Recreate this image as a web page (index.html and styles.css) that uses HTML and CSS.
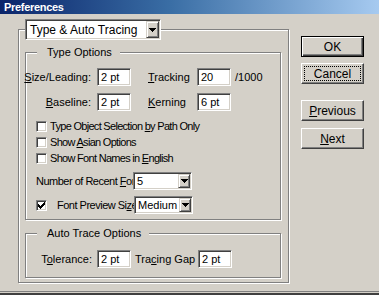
FILE: index.html
```html
<!DOCTYPE html>
<html>
<head>
<meta charset="utf-8">
<link rel="stylesheet" href="styles.css">
</head>
<body>
<div class="window">
  <div class="titlebar">Preferences</div>
  <div class="client">
    <fieldset class="group outer">
      <legend class="select-legend">
        <div class="select big">
          <span class="select-text">Type &amp; Auto Tracing</span>
          <span class="arrow-btn"><svg width="7" height="4" viewBox="0 0 7 4" shape-rendering="crispEdges"><path d="M0 0h7v1h-1v1h-1v1h-1v1h-1v-1h-1v-1h-1v-1h-1z" fill="#000"/></svg></span>
        </div>
      </legend>

      <fieldset class="group inner type-opts">
        <legend class="glabel">Type Options</legend>
        <div class="row">
          <div class="rlbl w55"><span><u>S</u>ize/Leading:</span></div>
          <div class="field f1">2 pt</div>
          <div class="tlbl"><u>T</u>racking</div>
          <div class="field">20</div>
          <div class="unit">/1000</div>
        </div>
        <div class="row r2">
          <div class="rlbl w55"><span><u>B</u>aseline:</span></div>
          <div class="field f1">2 pt</div>
          <div class="tlbl"><u>K</u>erning</div>
          <div class="field">6 pt</div>
        </div>
        <div class="checks">
          <div class="cbrow"><span class="cb"></span><span class="cbtext">Type Object Selection <u>b</u>y Path Only</span></div>
          <div class="cbrow"><span class="cb"></span><span class="cbtext">Show <u>A</u>sian Options</span></div>
          <div class="cbrow"><span class="cb"></span><span class="cbtext">Show Font Names in <u>E</u>nglish</span></div>
        </div>
        <div class="ddrow">
          <div class="ddlbl wide"><span>Number of Recent <u>F</u>onts:</span></div>
          <div class="select small">
            <span class="select-text">5</span>
            <span class="arrow-btn"><svg width="7" height="4" viewBox="0 0 7 4" shape-rendering="crispEdges"><path d="M0 0h7v1h-1v1h-1v1h-1v1h-1v-1h-1v-1h-1v-1h-1z" fill="#000"/></svg></span>
          </div>
        </div>
        <div class="ddrow r-dd2">
          <span class="cb checked"><svg width="7" height="7" viewBox="0 0 7 7" shape-rendering="crispEdges"><path d="M6 0h1v3h-1v1h-1v1h-1v1h-1v1h-1v-1h-1v-1h-1v-3h1v1h1v1h1v-1h1v-1h1z" fill="#000"/></svg></span>
          <div class="ddlbl narrow"><span>Font Preview Si<u>z</u>e:</span></div>
          <div class="select small">
            <span class="select-text">Medium</span>
            <span class="arrow-btn"><svg width="7" height="4" viewBox="0 0 7 4" shape-rendering="crispEdges"><path d="M0 0h7v1h-1v1h-1v1h-1v1h-1v-1h-1v-1h-1v-1h-1z" fill="#000"/></svg></span>
          </div>
        </div>
      </fieldset>

      <fieldset class="group inner trace-opts">
        <legend class="glabel">Auto Trace Options</legend>
        <div class="row">
          <div class="rlbl w56"><span>T<u>o</u>lerance:</span></div>
          <div class="field f2">2 pt</div>
          <div class="tlbl gap">Tra<u>c</u>ing Gap</div>
          <div class="field">2 pt</div>
        </div>
      </fieldset>
    </fieldset>

    <div class="buttons">
      <div class="btn default">OK</div>
      <div class="btn focus b-cancel">Cancel</div>
      <div class="btn b-prev"><u>P</u>revious</div>
      <div class="btn b-next"><u>N</u>ext</div>
    </div>
  </div>
</div>
</body>
</html>
```

FILE: styles.css
```css
* { box-sizing: border-box; }

html, body {
  margin: 0;
  padding: 0;
  background: #d4d0c8;
}

body {
  font-family: "Liberation Sans", Arial, sans-serif;
  font-size: 11px;
  color: #000;
}

.window {
  width: 379px;
  height: 295px;
  display: flex;
  flex-direction: column;
  border-bottom: 2px solid #404040;
  overflow: hidden;
}

.titlebar {
  height: 14px;
  flex: none;
  background: linear-gradient(to right, #0a246a 0%, #3a6ea5 45%, #a6caf0 100%);
  color: #fff;
  font-weight: bold;
  font-size: 11px;
  letter-spacing: -0.3px;
  line-height: 14px;
  padding-left: 4px;
}

.client {
  height: 278px;
  flex: none;
  display: flex;
  align-items: flex-start;
  padding-left: 18px;
  border-bottom: 1px solid #808080;
}

/* group boxes */
.group {
  margin: 0;
  min-width: 0;
  border: 1px solid #808080;
  box-shadow: 1px 1px 0 #fff, inset 1px 1px 0 #fff;
}

.outer {
  width: 271px;
  margin-top: 5px;
  padding: 6px 7px 4px 6px;
}

.inner {
  width: 256px;
  padding: 9px 0 5px 10px;
}

.trace-opts {
  margin-top: 7px;
  padding: 10px 0 9px 10px;
}

.select-legend {
  padding: 0;
  margin: 0;
  display: block;
}

.glabel {
  background: #d4d0c8;
  line-height: 13px;
  height: 13px;
  padding: 0 8px 0 10px;
  margin-left: 1px;
}

/* select boxes */
.select {
  display: flex;
  background: #fff;
  border: 1px solid;
  border-color: #808080 #fff #fff #808080;
  box-shadow: inset 1px 1px 0 #404040, inset -1px -1px 0 #d4d0c8;
  padding: 1px;
}

.select.big {
  width: 136px;
  height: 21px;
}

.select.small {
  width: 59px;
  height: 18px;
  flex: none;
}

.select-text {
  flex: 1;
  padding-left: 2px;
  white-space: nowrap;
  overflow: hidden;
  display: flex;
  align-items: center;
  font-size: 11px;
}

.big .select-text {
  font-size: 12px;
  padding-left: 3px;
}

.arrow-btn {
  flex: none;
  width: 12px;
  background: #d4d0c8;
  border: 1px solid;
  border-color: #d4d0c8 #404040 #404040 #d4d0c8;
  box-shadow: inset 1px 1px 0 #fff, inset -1px -1px 0 #808080;
  display: flex;
  align-items: center;
  justify-content: center;
}

.big .arrow-btn {
  width: 13px;
}

/* rows */
.row {
  display: flex;
  align-items: center;
  height: 18px;
}

.r2 { margin-top: 7px; }

.rlbl {
  display: flex;
  justify-content: flex-end;
  white-space: nowrap;
  flex: none;
}

.w55 { width: 55px; }
.w56 { width: 56px; }

.field {
  flex: none;
  width: 34px;
  height: 18px;
  background: #fff;
  border: 1px solid;
  border-color: #808080 #fff #fff #808080;
  box-shadow: inset 1px 1px 0 #404040, inset -1px -1px 0 #d4d0c8;
  padding-left: 3px;
  line-height: 16px;
  white-space: nowrap;
}

.f1 { margin-left: 6px; }
.f2 { margin-left: 5px; }

.tlbl {
  flex: none;
  width: 49px;
  margin-left: 17px;
  white-space: nowrap;
}

.tlbl.gap {
  width: 63px;
  margin-left: 4px;
}

.unit {
  margin-left: 4px;
  white-space: nowrap;
}

/* checkboxes */
.checks {
  margin-top: 7px;
}

.cbrow {
  display: flex;
  align-items: center;
  height: 16px;
}

.cb {
  flex: none;
  width: 11px;
  height: 11px;
  background: #fff;
  border: 1px solid;
  border-color: #808080 #fff #fff #808080;
  box-shadow: inset 1px 1px 0 #404040, inset -1px -1px 0 #d4d0c8;
  margin-right: 3px;
  display: flex;
  align-items: center;
  justify-content: center;
}

.cbtext {
  white-space: nowrap;
  letter-spacing: -0.7px;
}

.ddrow {
  display: flex;
  align-items: center;
  height: 18px;
  margin-top: 6px;
}

.ddlbl {
  flex: none;
  white-space: nowrap;
  overflow: hidden;
  letter-spacing: -0.5px;
}

.ddlbl.wide { width: 97px; }

.ddlbl.narrow {
  width: 77px;
  margin-left: 10px;
}

.r-dd2 .cb {
  margin-right: 0;
}

/* buttons */
.buttons {
  display: flex;
  flex-direction: column;
  margin-left: 12px;
  padding-top: 22px;
}

.btn {
  width: 63px;
  height: 21px;
  display: flex;
  align-items: center;
  justify-content: center;
  background: #d4d0c8;
  border: 1px solid;
  border-color: #fff #404040 #404040 #fff;
  box-shadow: inset -1px -1px 0 #808080;
  font-size: 12px;
}

.btn.default {
  border: 1px solid #000;
  box-shadow: inset 1px 1px 0 #fff, inset -1px -1px 0 #404040, inset -2px -2px 0 #808080;
}

.btn.focus {
  outline: 1px dotted #000;
  outline-offset: -4px;
}

.b-cancel { margin-top: 6px; }
.b-prev { margin-top: 16px; }
.b-next { margin-top: 7px; }
```
